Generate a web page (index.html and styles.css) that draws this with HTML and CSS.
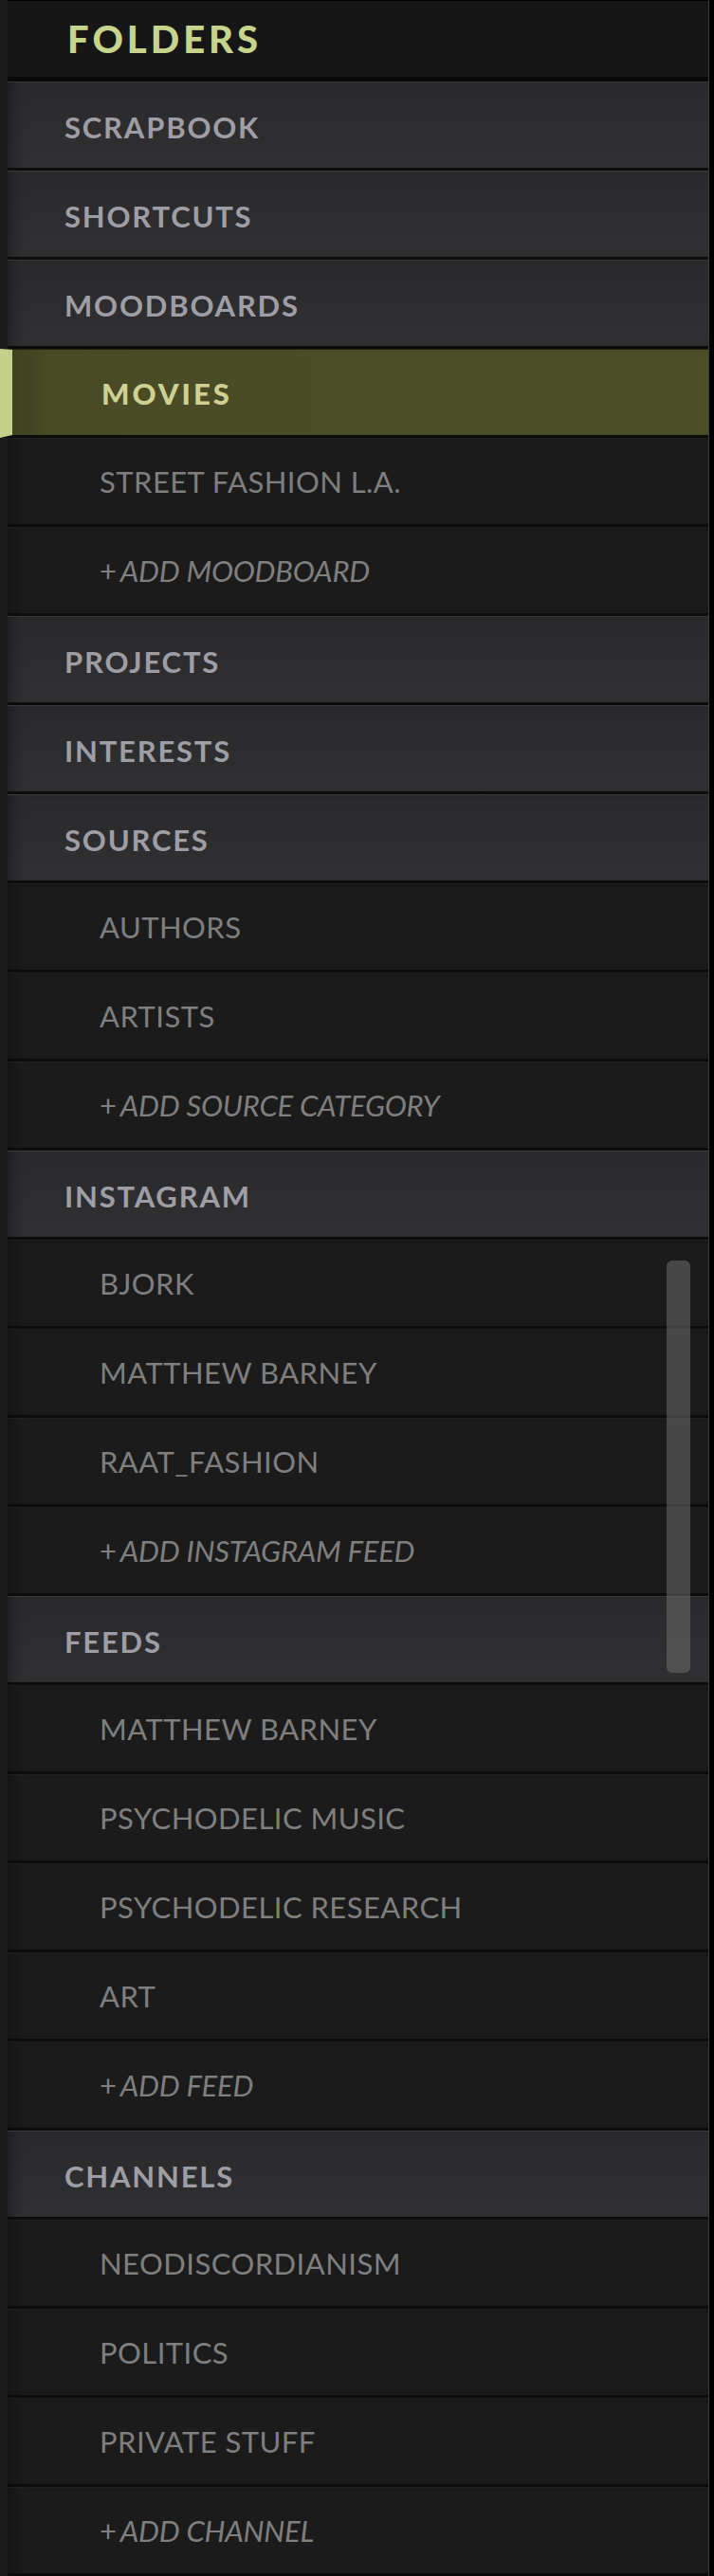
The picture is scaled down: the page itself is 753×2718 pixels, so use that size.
FILE: index.html
```html
<!DOCTYPE html>
<html lang="en">
<head>
<meta charset="utf-8">
<title>Folders</title>
<link rel="stylesheet" href="styles.css">
</head>
<body>
<div class="panel">
  <div class="header"><span class="title">FOLDERS</span></div>
  <ul class="list">
    <li class="row parent">SCRAPBOOK</li>
    <li class="row parent">SHORTCUTS</li>
    <li class="row parent">MOODBOARDS</li>
    <li class="row child active">MOVIES</li>
    <li class="row child">STREET FASHION L.A.</li>
    <li class="row child add"><span class="plus">+</span>ADD MOODBOARD</li>
    <li class="row parent">PROJECTS</li>
    <li class="row parent">INTERESTS</li>
    <li class="row parent">SOURCES</li>
    <li class="row child">AUTHORS</li>
    <li class="row child">ARTISTS</li>
    <li class="row child add"><span class="plus">+</span>ADD SOURCE CATEGORY</li>
    <li class="row parent">INSTAGRAM</li>
    <li class="row child">BJORK</li>
    <li class="row child">MATTHEW BARNEY</li>
    <li class="row child">RAAT_FASHION</li>
    <li class="row child add"><span class="plus">+</span>ADD INSTAGRAM FEED</li>
    <li class="row parent">FEEDS</li>
    <li class="row child">MATTHEW BARNEY</li>
    <li class="row child">PSYCHODELIC MUSIC</li>
    <li class="row child">PSYCHODELIC RESEARCH</li>
    <li class="row child">ART</li>
    <li class="row child add"><span class="plus">+</span>ADD FEED</li>
    <li class="row parent">CHANNELS</li>
    <li class="row child">NEODISCORDIANISM</li>
    <li class="row child">POLITICS</li>
    <li class="row child">PRIVATE STUFF</li>
    <li class="row child add"><span class="plus">+</span>ADD CHANNEL</li>
  </ul>
  <div class="thumb"></div>
</div>
</body>
</html>
```

FILE: styles.css
```css
* { box-sizing: border-box; }
html, body {
  margin: 0;
  padding: 0;
  background: #000;
}
body {
  font-family: Lato, "Open Sans", sans-serif;
}
.panel {
  position: relative;
  width: 748px;
  padding-left: 8px;
  background: #1d1d1d;
  border-right: 1px solid #3a3a3a;
}
.header {
  height: 86px;
  border-top: 1px solid #000;
  border-bottom: 5px solid #0a0a0a;
  background: #161616;
  display: flex;
  align-items: center;
  padding-left: 63px;
}
.title {
  color: #c7d48b;
  font-weight: 900;
  font-size: 40px;
  letter-spacing: 4px;
  line-height: 1;
}
.list {
  list-style: none;
  margin: 0;
  padding: 0;
}
.row {
  height: 94px;
  display: flex;
  align-items: center;
  font-size: 31px;
  line-height: 1;
  border-bottom: 3px solid #0c0c0c;
  border-top: 1px solid #262626;
}
.parent {
  padding-left: 60px;
  padding-top: 5px;
  color: #9f9ea4;
  font-weight: 700;
  letter-spacing: 1.8px;
  background: linear-gradient(#2a2a2d, #303033);
  border-top-color: #3a3a3d;
  box-shadow: inset 14px 0 14px -10px rgba(0,0,0,0.35);
}
.child {
  padding-left: 97px;
  color: #7f7f7f;
  font-weight: 400;
  letter-spacing: 0.45px;
  background: #1b1b1b;
  border-top-color: #1f1f1f;
  box-shadow: inset 14px 0 14px -10px rgba(0,0,0,0.3);
}
.add {
  font-style: italic;
  letter-spacing: -0.25px;
}
.plus {
  font-style: normal;
  margin-right: 4px;
}
.active {
  margin-left: -8px;
  padding-left: 94px;
  padding-top: 3px;
  border-left: 13px solid #c5d08b;
  border-top-color: #202010;
  background: linear-gradient(90deg, #3f4120 0, #484b25 40px, #4b4f27 100%);
  color: #cfd192;
  font-weight: 900;
  letter-spacing: 3px;
  box-shadow: none;
}
.thumb {
  position: absolute;
  left: 703px;
  top: 1330px;
  width: 25px;
  height: 435px;
  border-radius: 6px;
  background: rgba(112, 112, 112, 0.53);
}
```
